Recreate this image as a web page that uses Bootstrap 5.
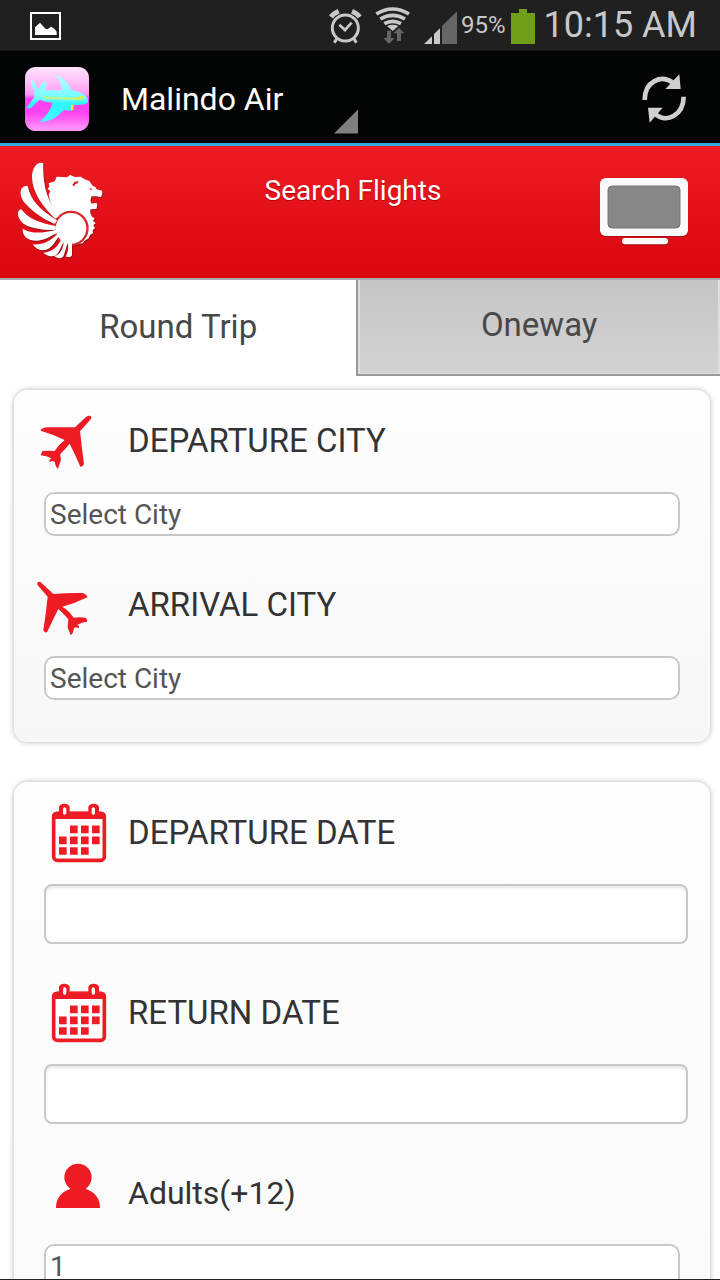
<!DOCTYPE html>
<html lang="en">
<head>
<meta charset="utf-8">
<meta name="viewport" content="width=device-width, initial-scale=1">
<title>Malindo Air - Search Flights</title>
<link href="https://cdn.jsdelivr.net/npm/bootstrap@5.3.0/dist/css/bootstrap.min.css" rel="stylesheet">
<style>
  body { font-family: Roboto, "Noto Sans", sans-serif; font-size: 32px; line-height: 40px; color: #333; background: #fff; border-bottom: 1px solid #222; }
  svg { display: block; flex: none; }
  .status-bar { background: #202020; color: #c8c8c8; height: 51px; padding: 0 23px 0 28px; border-bottom: 1px solid #141414; }
  .status-pct { font-size: 24px; }
  .status-time { font-size: 36px; }
  .app-bar { background: #030404; height: 95px; border-bottom: 3px solid #33a8dc; padding: 3px 32px 0 25px; }
  .app-picker { color: #fff; width: 245px; height: 70px; font-size: 32px; line-height: 40px; }
  .app-picker:hover { color: #fff; }
  .picker-corner { position: absolute; right: 0; bottom: 0; width: 24px; height: 24px; background: #808080; clip-path: polygon(100% 0, 100% 100%, 0 100%); }
  .flight-head { height: 134px; background: linear-gradient(#ed1c24, #d9060f); border-bottom: 2px solid #aaa8ac; color: #fff; }
  .flight-head h1 { font-size: 28px; line-height: 34px; text-shadow: 0 1px 1px #a00; margin: 28px 0 0; }
  .trip-tabs { display: grid; grid-template-columns: 49.5% 1fr; }
  .trip-tabs .nav-link { color: #484848; height: 96px; border: 0; border-radius: 0; padding: 0 0 2px; background: #fff; font-size: 33px; }
  .trip-tabs .tab-off { background: linear-gradient(#c5c5c5, #d3d3d3); border: solid #999; border-width: 0 0 2px 2px; box-shadow: inset 2px -1px #dedede, inset -2px 0 #dedede; padding-bottom: 4px; }
  .form-page { overflow-y: auto; scrollbar-width: none; }
  .form-page::-webkit-scrollbar { display: none; }
  .panel { margin: 14px 10px 40px 14px; padding: 20px 22px 4px 18px; border-radius: 14px; background: linear-gradient(#fdfdfd, #f7f7f7); box-shadow: 0 0 5px 1px #c8c8c8; }
  .panel + .panel { min-height: 1080px; }
  .field { margin-bottom: 38px; }
  .field-label { height: 64px; margin-bottom: 18px; color: #333; }
  .field-label span { padding-bottom: 2px; }
  .caps { font-size: 33px; }
  .field-box { margin-left: 12px; border: 2px solid #c8c8c8; background: #fff; color: #555; }
  .pick { width: calc(100% - 20px); height: 44px; border-radius: 10px; padding: 1px 4px 0; font-size: 28px; line-height: 39px; appearance: none; display: block; }
  .date-box { width: calc(100% - 12px); height: 60px; border-radius: 8px; padding: 0 8px; display: block; box-shadow: inset 0 2px 3px #e6e6e6; }
</style>
</head>
<body class="vh-100 d-flex flex-column overflow-hidden">

<div class="status-bar d-flex align-items-center justify-content-between flex-shrink-0">
  <svg width="36" height="50" viewBox="84 0 108 150" fill="#fff"><path d="M90 36h93v84H90zM96 42v72h81V42z" fill-rule="evenodd"/><path d="M105 105V82l15-14 8 9 8 9 7 2 10-8 10 6 7 9v10z"/></svg>
  <div class="d-flex align-items-center">
    <svg width="138" height="50" viewBox="6 0 414 150">
      <g fill="none" stroke="#c8c8c8">
        <circle cx="73" cy="84" r="39" stroke-width="9"/>
        <path d="M55 74l17 16 20-22" stroke-width="8"/>
        <path d="M30 51Q37 41 53 34M116 51Q109 41 93 34" stroke-width="15"/>
        <path d="M48 115l-8 13M98 115l8 13" stroke-width="9"/>
        <path d="M166 42q49-30 98 0M178 57q37-22 74 0M190 71q25-14 50 0" stroke-width="11"/>
      </g>
      <path fill="#c8c8c8" d="M198 78q17-8 34 0l-17 15zM309 132l24-23v23zM339 132v-30l18-17v47z"/>
      <path fill="#666" d="M363 132V78l45-44v98zM198 92h12v22h11l-17 18-17-18h11zM228 123v-23h-11l17-17 16 17h-10v23z"/>
    </svg>
    <span class="status-pct">95%</span>
    <svg class="ms-1 me-2" width="26" height="50" viewBox="0 0 26 50"><path fill="#6f9e19" d="M1 13h8V9h8v4h8v31H1z"/></svg>
    <span class="status-time">10:15 AM</span>
  </div>
</div>

<header class="app-bar d-flex align-items-center justify-content-between flex-shrink-0">
  <div class="d-flex align-items-center gap-4">
    <svg width="64" height="64" viewBox="75 198 192 192">
      <defs>
        <linearGradient id="pink" x2="0" y2="1"><stop offset="0" stop-color="#ffe4fb"/><stop offset=".42" stop-color="#ff9ff5"/><stop offset=".5" stop-color="#ff40f0"/><stop offset=".72" stop-color="#ff44f2"/><stop offset="1" stop-color="#ff9dfa"/></linearGradient>
        <linearGradient id="aqua" x2="0" y2="1"><stop offset="0" stop-color="#b8fbff"/><stop offset=".5" stop-color="#70ffff"/><stop offset=".6" stop-color="#2cf6ff"/><stop offset="1" stop-color="#40f8ff"/></linearGradient>
      </defs>
      <rect x="75" y="198" width="192" height="192" rx="32" fill="url(#pink)"/>
      <path fill="url(#aqua)" d="M92 235Q104 237 112 265L130 243Q139 240 141 247L136 268H186Q184 240 166 224Q194 223 215 268Q240 271 258 286Q266 294 263 306Q250 312 222 312L218 328Q204 330 192 327Q160 364 119 363Q150 335 158 305Q135 303 118 296L93 321Q85 323 79 320L103 289Q101 280 104 273Q94 258 92 235Z"/>
      <path d="M133 289q45 4 92 4" stroke="#f4f22d" stroke-width="6" stroke-dasharray="7 5" fill="none"/>
      <path d="M228 292q10-7 21-6l2 5q-8 6-24 6zM213 311h7v17h-7z" fill="#f0ee10"/>
    </svg>
    <button type="button" class="app-picker btn border-0 rounded-0 position-relative text-start py-0 px-2" aria-haspopup="listbox">Malindo Air<span class="picker-corner"></span></button>
  </div>
  <button type="button" class="btn border-0 p-0" aria-label="Refresh">
    <svg width="48" height="60" viewBox="60 27 144 180" fill="none" stroke="#d0d0d0" stroke-width="14">
      <path d="M74 120C74 64 124 42 160 69M191 110C190 166 139 192 106 162"/>
      <path d="M178 43l4 44h-46zM84 143h44l-39 45z" fill="#d0d0d0" stroke="none"/>
    </svg>
  </button>
</header>

<div class="flight-head d-flex flex-shrink-0">
  <svg width="126" height="132" viewBox="0 18 378 396" fill="#fff">
    <g style="filter:drop-shadow(2px 3px 2px #8b1015)">
    <path d="M146 130L164 124L170 110L202 112L210 104L224 111L242 110L254 118L268 123L278 137L286 141L290 148L306 152L307 162L303 172L290 169L275 169L271 181L275 191L289 188L292 195L289 207L271 208L271 219L276 230L284 235L279 242L287 250L280 256L285 265L278 270L279 280L270 285L266 295L256 301L248 310L236 312L224 316L212 300L176 232Q153 206 146 164L151 153L143 148L148 139Z"/>
    <circle cx="213" cy="265" r="51" fill="#d7272d" stroke="#d7272d" stroke-width="4"/>
    <circle cx="213" cy="265" r="46"/>
    <path d="M130 70c-16-8-34 12-34 40 0 46 32 90 70 126l11-7c-36-50-49-91-47-159z"/>
    <path d="M83 138c-24-4-30 28-5 55 25 28 58 47 86 59l7-11c-53-34-78-58-88-103z"/>
    <path d="M64 208c-18 2-12 37 18 50 30 11 61 14 85 11v-11c-48-9-82-21-103-50z"/>
    <path d="M68 266c-1 24 16 36 41 36 26 0 43-14 61-22l-2-10c-38 9-73 13-100-4z"/>
    <path d="M98 313c12 20 34 22 51 11 15-11 20-27 30-38l-6-5c-22 22-45 34-75 32z"/>
    <path d="M130 338c19 17 39 13 46-2 9-17 11-26 19-33l-10-10c-9 24-23 41-55 45zM163 349c17 11 28 4 30-8l10-33-11-3c-4 22-10 38-29 44zM197 349q14 7 19-3v-40h-12c1 19 0 34-7 43z"/>
    </g>
    <path d="M217 134l7-9 12-2-3 7-8 3-2 7zM267 145l10 1-4 5z" fill="#d42028"/>
  </svg>
  <h1 class="flex-fill text-center fw-normal">Search Flights</h1>
  <svg width="140" height="132" viewBox="0 -42 420 396">
    <g fill="#fafafa" style="filter:drop-shadow(0 2px 2px #8b1015)"><rect x="60" y="54" width="264" height="174" rx="17"/><rect x="126" y="234" width="138" height="19" rx="9"/></g>
    <rect x="84" y="78" width="216" height="126" rx="12" fill="#878787" stroke="#777" stroke-width="3"/>
  </svg>
</div>

<main class="form-page flex-fill">
  <div class="trip-tabs" role="tablist">
    <button type="button" class="nav-link active" role="tab" aria-selected="true">Round Trip</button>
    <button type="button" class="nav-link tab-off" role="tab" aria-selected="false">Oneway</button>
  </div>

  <form>
    <section class="panel">
      <div class="field">
        <label class="field-label caps d-flex align-items-center" for="from">
          <svg width="96" height="64" viewBox="36 30 288 192" fill="#ed1c24"><path d="M213 49q3 5-2 10l-31 35q6 53 12 98-3 9-11 8-15-36-32-69-14 17-28 31 0 9 2 17l-9 27q-6-2-10-21l-7-2-8 3-1-6 6-5q-13-7-32-9l5-13q20-2 37 0 12-20 30-33-37-18-72-28-2-5 16-10h87l33-31q9-7 15-2z"/></svg><span>DEPARTURE CITY</span></label>
        <select class="field-box pick" id="from"><option>Select City</option></select>
      </div>
      <div class="field">
        <label class="field-label caps d-flex align-items-center" for="to">
          <svg width="96" height="64" viewBox="36 27 288 192" fill="#ed1c24"><path d="M53 52q-4 6 2 11l28 32q-5 50-13 100 3 9 11 7 17-36 34-70 18 16 30 31l-2 25 9 22q7-2 10-21l7-2 7 3 1-6-5-5q14-7 29-9 3-5-4-12-21-2-36 0-14-21-34-33 39-10 75-28 2-5-13-13-45-1-89 3L64 53q-6-5-11-1z"/></svg><span>ARRIVAL CITY</span></label>
        <select class="field-box pick" id="to"><option>Select City</option></select>
      </div>
    </section>

    <section class="panel">
      <div class="field">
        <label class="field-label caps d-flex align-items-center" for="depart">
          <svg width="96" height="64" viewBox="6 36 288 192">
            <g id="cal"><rect x="71" y="70" width="152" height="141" rx="11" fill="#fff" stroke="#ed1c24" stroke-width="11"/>
            <path fill="#ed1c24" d="M66 87V77q2-12 15-12h6V50q4-9 16-9t16 9v15h56V50q4-9 16-9t16 9v15h7q12 1 14 12v10z"/>
            <path d="M104 57v12M190 57v12" stroke="#fff" stroke-width="10" stroke-linecap="round"/>
            <path stroke="#ed1c24" stroke-width="23" stroke-dasharray="23 10" d="M120 118h90M87 151h123M87 183h89"/></g>
          </svg><span>DEPARTURE DATE</span></label>
        <input type="text" class="field-box date-box" id="depart">
      </div>
      <div class="field">
        <label class="field-label caps d-flex align-items-center" for="return">
          <svg width="96" height="64" viewBox="6 36 288 192"><use href="#cal"/></svg><span>RETURN DATE</span></label>
        <input type="text" class="field-box date-box" id="return">
      </div>
      <div class="field">
        <label class="field-label d-flex align-items-center" for="adults">
          <svg width="96" height="64" viewBox="6 36 288 192" fill="#ed1c24"><circle cx="144" cy="82" r="41"/><path d="M78 174q0-42 42-57v-10h48v10q42 15 42 57z"/></svg><span>Adults(+12)</span></label>
        <select class="field-box pick" id="adults"><option>1</option><option>2</option><option>3</option></select>
      </div>
    </section>
  </form>
</main>

<script src="https://cdn.jsdelivr.net/npm/bootstrap@5.3.0/dist/js/bootstrap.bundle.min.js"></script>
</body>
</html>
